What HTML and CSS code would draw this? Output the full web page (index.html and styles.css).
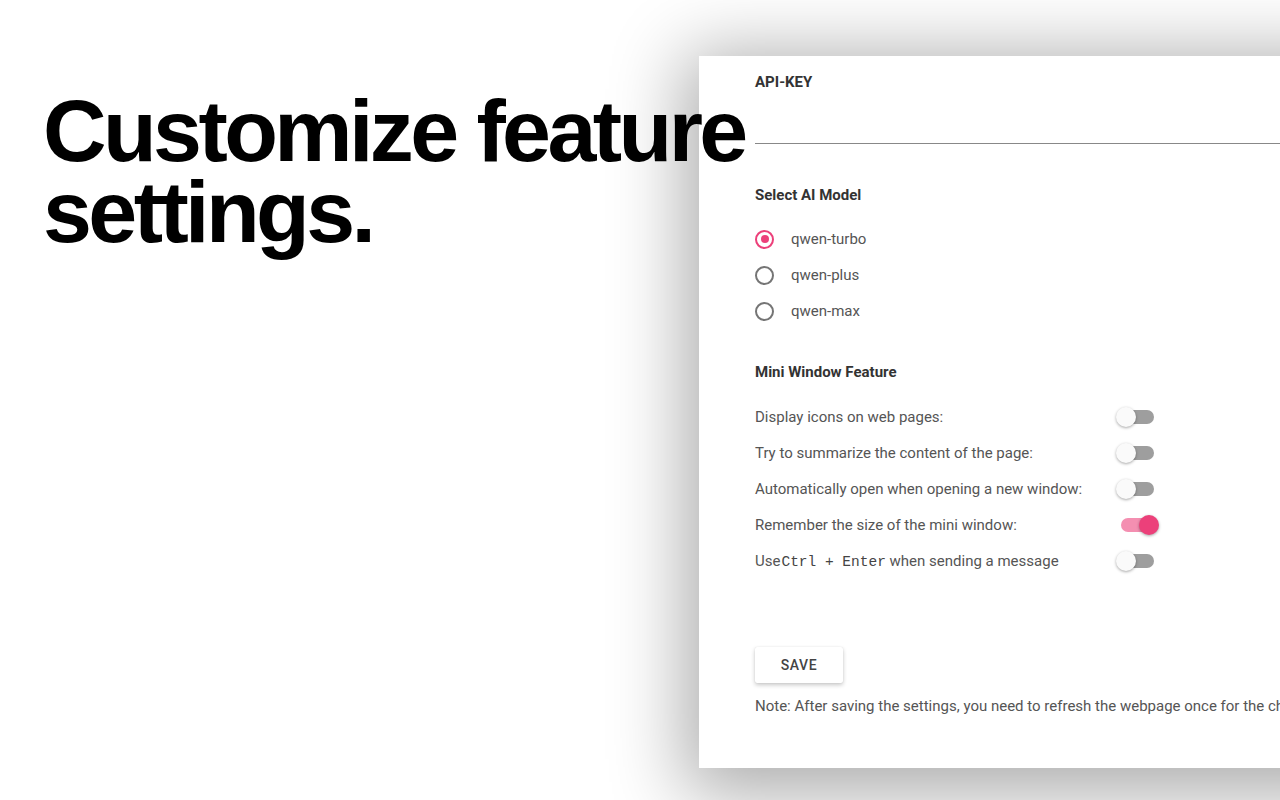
FILE: index.html
```html
<!DOCTYPE html>
<html>
<head>
  <meta charset="UTF-8">
  <title>Customize feature settings</title>
  <link rel="stylesheet" href="styles.css">
</head>
<body>
  <div class="page">
    <div class="intro">
      <h1>Customize feature<br>settings.</h1>
    </div>
    <div class="panel">
      <div class="field">
        <label for="api-key">API-KEY</label>
        <input id="api-key" type="text">
      </div>

      <h2 class="section-title">Select AI Model</h2>
      <div class="radio-list">
        <label class="radio checked"><span class="radio-dot"></span>qwen-turbo</label>
        <label class="radio"><span class="radio-dot"></span>qwen-plus</label>
        <label class="radio"><span class="radio-dot"></span>qwen-max</label>
      </div>

      <h2 class="section-title mini">Mini Window Feature</h2>
      <div class="switch-list">
        <div class="switch-row">
          <span class="switch-label">Display icons on web pages:</span>
          <span class="switch"><span class="thumb"></span></span>
        </div>
        <div class="switch-row">
          <span class="switch-label">Try to summarize the content of the page:</span>
          <span class="switch"><span class="thumb"></span></span>
        </div>
        <div class="switch-row">
          <span class="switch-label">Automatically open when opening a new window:</span>
          <span class="switch"><span class="thumb"></span></span>
        </div>
        <div class="switch-row">
          <span class="switch-label">Remember the size of the mini window:</span>
          <span class="switch on"><span class="thumb"></span></span>
        </div>
        <div class="switch-row">
          <span class="switch-label">Use<code>Ctrl + Enter</code> when sending a message</span>
          <span class="switch"><span class="thumb"></span></span>
        </div>
      </div>

      <button class="save-btn">SAVE</button>
      <p class="note">Note: After saving the settings, you need to refresh the webpage once for the changes to take effect.</p>
    </div>
  </div>
</body>
</html>
```
FILE: styles.css
```css
body {
  margin: 0;
  background: #fff;
  overflow: hidden;
  height: 800px;
  font-family: Roboto, "Noto Sans", sans-serif;
}

.page {
  display: flex;
  align-items: flex-start;
  width: 1280px;
  height: 800px;
  overflow: hidden;
}

.intro {
  width: 699px;
  flex-shrink: 0;
  padding-left: 43px;
  box-sizing: border-box;
  position: relative;
  z-index: 2;
}

h1 {
  margin: 90px 0 0;
  font-family: "Liberation Sans", Arial, sans-serif;
  font-weight: 700;
  font-size: 88px;
  line-height: 81px;
  letter-spacing: -3.6px;
  color: #000;
  white-space: nowrap;
}

.panel {
  flex-shrink: 0;
  width: 700px;
  height: 712px;
  margin-top: 56px;
  padding: 16px 0 0 56px;
  box-sizing: border-box;
  background: #fff;
  box-shadow: 0 12px 70px 14px rgba(0, 0, 0, 0.33);
  color: #333;
  font-size: 15px;
}

.field label {
  display: block;
  font-weight: 700;
  line-height: 20px;
  color: #333;
}

.field input {
  display: block;
  width: 100%;
  height: 32px;
  margin-top: 19px;
  padding: 0;
  border: none;
  border-bottom: 1px solid #888;
  outline: none;
  font: inherit;
}

.section-title {
  margin: 41px 0 0;
  font-size: 15px;
  font-weight: 700;
  line-height: 20px;
  color: #333;
}

.section-title.mini {
  margin-top: 33px;
}

.radio-list {
  margin-top: 16px;
}

.radio {
  display: flex;
  align-items: center;
  height: 36px;
  color: #555;
}

.radio-dot {
  width: 19px;
  height: 19px;
  box-sizing: border-box;
  border: 2px solid #757575;
  border-radius: 50%;
  margin-right: 17px;
  position: relative;
}

.radio.checked .radio-dot {
  border-color: #ec407a;
}

.radio.checked .radio-dot::after {
  content: "";
  position: absolute;
  left: 3.5px;
  top: 3.5px;
  width: 8px;
  height: 8px;
  border-radius: 50%;
  background: #ec407a;
}

.switch-list {
  margin-top: 17px;
}

.switch-row {
  display: flex;
  align-items: center;
  height: 36px;
  color: #555;
}

.switch-label {
  width: 361px;
}

.switch-label code {
  font-family: "Liberation Mono", "Courier New", monospace;
  font-size: 14.5px;
  margin-left: 1px;
  color: #444;
}

.switch {
  width: 36px;
  height: 14px;
  margin-left: 2px;
  border-radius: 7px;
  background: #9e9e9e;
  position: relative;
}

.switch .thumb {
  position: absolute;
  left: -2px;
  top: -3px;
  width: 20px;
  height: 20px;
  border-radius: 50%;
  background: #fafafa;
  box-shadow: 0 1px 3px rgba(0, 0, 0, 0.35);
}

.switch.on {
  margin-left: 5px;
  background: #f48fb1;
}

.switch.on .thumb {
  left: 18px;
  background: #ec407a;
}

.save-btn {
  display: block;
  margin-top: 68px;
  width: 88px;
  height: 36px;
  border: none;
  border-radius: 2px;
  background: #fff;
  box-shadow: 0 2px 4px rgba(0, 0, 0, 0.22), 0 0 1px rgba(0, 0, 0, 0.15);
  font-family: Roboto, sans-serif;
  font-size: 14px;
  font-weight: 500;
  letter-spacing: 0.6px;
  color: #444;
}

.note {
  margin: 13px 0 0;
  line-height: 20px;
  color: #555;
  white-space: nowrap;
}
```
